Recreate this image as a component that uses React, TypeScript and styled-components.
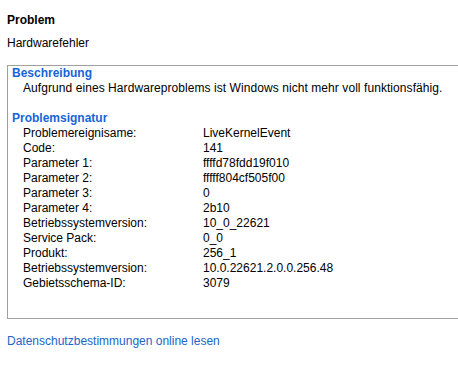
import React from 'react';
import styled, { createGlobalStyle } from 'styled-components';

const GlobalStyle = createGlobalStyle`
  html, body {
    margin: 0;
    padding: 0;
    background: #ffffff;
    overflow: hidden;
  }
  body {
    font-family: "Liberation Sans", Arial, sans-serif;
    font-size: 12px;
    color: #000000;
  }
`;

const Page = styled.div`
  width: 458px;
  height: 366px;
  padding: 13px 0 0 7px;
  box-sizing: border-box;
  line-height: 15px;
`;

const Label = styled.div`
  font-weight: bold;
`;

const Value = styled.div`
  margin-top: 8px;
`;

const Details = styled.div`
  margin-top: 14px;
  width: 470px;
  height: 254px;
  box-sizing: border-box;
  border: 1px solid #a0a0a0;
  padding: 0 0 0 4px;
`;

const SectionTitle = styled.div<{ $gap?: boolean }>`
  color: #1764d8;
  font-weight: bold;
  margin-top: ${p => (p.$gap ? '15px' : '0')};
`;

const Indent = styled.div`
  padding-left: 11px;
  letter-spacing: 0.07px;
`;

const Row = styled.div`
  display: grid;
  grid-template-columns: 180px 1fr;
  padding-left: 11px;
`;

const Link = styled.a`
  display: block;
  margin-top: 15px;
  color: #2064c8;
  text-decoration: none;
  cursor: pointer;
`;

const signature: [string, string][] = [
  ['Problemereignisame:', 'LiveKernelEvent'],
  ['Code:', '141'],
  ['Parameter 1:', 'ffffd78fdd19f010'],
  ['Parameter 2:', 'fffff804cf505f00'],
  ['Parameter 3:', '0'],
  ['Parameter 4:', '2b10'],
  ['Betriebssystemversion:', '10_0_22621'],
  ['Service Pack:', '0_0'],
  ['Produkt:', '256_1'],
  ['Betriebssystemversion:', '10.0.22621.2.0.0.256.48'],
  ['Gebietsschema-ID:', '3079'],
];

export default function App() {
  return (
    <Page>
      <GlobalStyle />
      <Label>Problem</Label>
      <Value>Hardwarefehler</Value>
      <Details>
        <SectionTitle>Beschreibung</SectionTitle>
        <Indent>Aufgrund eines Hardwareproblems ist Windows nicht mehr voll funktionsfähig.</Indent>
        <SectionTitle $gap>Problemsignatur</SectionTitle>
        {signature.map(([k, v], i) => (
          <Row key={i}>
            <span>{k}</span>
            <span>{v}</span>
          </Row>
        ))}
      </Details>
      <Link>Datenschutzbestimmungen online lesen</Link>
    </Page>
  );
}
